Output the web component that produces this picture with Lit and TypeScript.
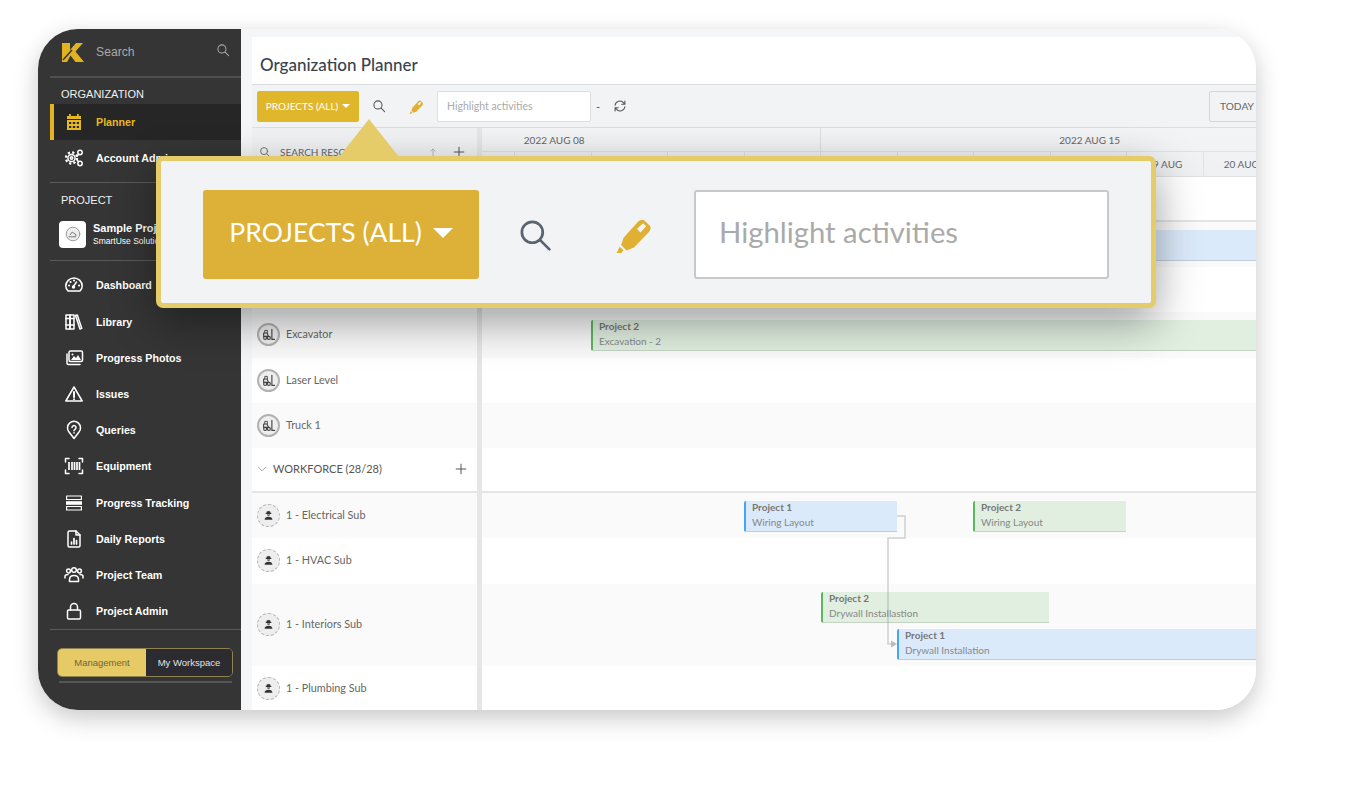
import { LitElement, html, css, svg } from 'lit';
import { customElement } from 'lit/decorators.js';

const icon = (body: unknown, size = 20, box = 20) => html`<svg
    class="ico"
    width=${size}
    height=${size}
    viewBox="0 0 ${box} ${box}"
    fill="none"
    stroke="currentColor"
    stroke-width="1.5"
    stroke-linecap="round"
    stroke-linejoin="round"
>
    ${body}
</svg>`;

const icons = {
    calendar: svg`<path fill="currentColor" stroke="none" d="M5 2h1.8v2H13V2h1.8v2h2.2v3H3V4h2zM3 8h14v10H3zM5 10v2h2.2v-2zm3.8 0v2h2.400v-2zm4 0v2H15v-2zM5 14v2h2.200v-2zm3.800 0v2h2.400v-2zm4 0v2H15v-2z"/>`,
    gears: svg`<circle cx="7.5" cy="10" r="3.6"/><circle cx="7.5" cy="10" r="5.6" stroke-width="2.2" stroke-dasharray="2.2 2.2" stroke-linecap="butt"/><circle cx="7.5" cy="10" r="1.2"/><circle cx="16" cy="4.5" r="2.2"/><circle cx="16" cy="15.5" r="2.2"/><path d="M13 8.200l1.600-2M13 12l1.600 1.800"/>`,
    dashboard: svg`<path d="M4 16h12c1.400-1.200 2.200-3 2.200-5A8.200 8 0 0 0 1.800 11c0 2 .8 3.800 2.200 5z"/><path d="M9 12l3.500-5"/><circle cx="9.500" cy="12" r="1" fill="currentColor"/><path d="M5 10.500h.1M6.500 7h.1M10 5.500h.1M15 10.500h.1" stroke-width="2"/>`,
    library: svg`<rect x="2" y="3" width="4" height="14"/><rect x="6" y="3" width="4" height="14"/><path d="M2 6.500h8M2 13h8M11.500 3.500l1.800-.6 4.500 13.500-1.800.6z"/>`,
    photos: svg`<rect x="5" y="3" width="13.500" height="10.500" rx="1.500"/><path d="M3 6v9a1.500 1.500 0 0 0 1.500 1.500H16"/><path fill="currentColor" stroke="none" d="M7 12l3-4 2 2 2-3 3 5z"/><circle cx="8.500" cy="6.500" r="1" fill="currentColor" stroke="none"/>`,
    issues: svg`<path d="M10 3L1.800 17h16.400z"/><path d="M10 8v5" stroke-width="2"/><path d="M10 15.200v.1" stroke-width="2"/>`,
    queries: svg`<path d="M10 18.500l-5-6.500a6.500 6.500 0 1 1 10 0z"/><path d="M8 7.500a2 2 0 1 1 3 1.800c-.7.4-1 .8-1 1.500M10 12.800v.1"/>`,
    equipment: svg`<path d="M1.500 6V2.500H5M15 2.500h3.500V6M1.500 14v3.500H5M15 17.500h3.500V14"/><path stroke-width="1.700" stroke-linecap="butt" d="M5 6v8M8 6v8M10.500 6v8M13 6v8M15.500 6v8"/>`,
    tracking: svg`<rect x="2.600" y="3" width="14.800" height="3.500" stroke-width="1.200"/><rect x="2" y="8.200" width="16" height="3.600" fill="currentColor" stroke="none"/><rect x="2.600" y="13.500" width="14.800" height="3.500" stroke-width="1.200"/>`,
    report: svg`<path d="M4 3.500A1.500 1.500 0 0 1 5.500 2H12l4 4v10.500a1.500 1.500 0 0 1-1.500 1.500h-9A1.500 1.500 0 0 1 4 16.500z"/><path d="M12 2v4h4"/><path d="M7.500 15v-2M10 15V9.500M12.500 15v-3.500" stroke-width="1.700"/>`,
    team: svg`<circle cx="4.500" cy="6" r="1.900"/><circle cx="10" cy="5" r="2.300"/><circle cx="15.500" cy="6" r="1.900"/><path d="M5.500 16.500v-2c0-2.500 2-4 4.500-4s4.500 1.500 4.500 4v2z"/><path d="M1 13v-1.500C1 10 2.500 9.500 4 9.500M19 13v-1.500c0-1.500-1.500-2-3-2"/>`,
    lock: svg`<rect x="3.500" y="9" width="13" height="9" rx="1.200"/><path d="M6.500 9V6a3.500 3.500 0 0 1 7 0v3"/>`,
    search: svg`<circle cx="8.500" cy="8.500" r="5.800"/><path d="M13 13l5 5"/>`,
    plus: svg`<path d="M10 2v16M2 10h16"/>`,
    refresh: svg`<path d="M3 9a7 7 0 0 1 12.300-3.500L17 7.500M17 3v4.500h-4.500M17 11a7 7 0 0 1-12.300 3.500L3 12.500M3 17v-4.500h4.500"/>`,
    chevron: svg`<path d="M4 7l6 6 6-6"/>`,
    up: svg`<path d="M10 17V4M5.500 8.500L10 4l4.500 4.500"/>`,
    pen: svg`<path fill="currentColor" stroke="none" d="M.8 19.500l1.700-3.300 2 1.800-1.200 1.500z"/><path fill="currentColor" stroke="none" fill-rule="evenodd" d="M3.200 15.300l1.300-3.800 7.500-8.300c1-1.100 2.600-1.700 3.600-.7l2.600 2.500c1 1 .5 2.600-.5 3.600l-7.700 8-3.900 1.600zM11.500 6.800l1.900 1.900 3-3.300-1.700-1.600z"/>`,
    forklift: svg`<path d="M3.500 12.500V8h4.500l2 4.500M3.500 12.500h7"/><path d="M5 8V4.500h3.500V8" stroke-width="1.200"/><circle cx="5.500" cy="14.500" r="2"/><circle cx="10.500" cy="14.500" r="2"/><path d="M14.500 3V16.500h3.500"/>`,
    worker: svg`<path fill="currentColor" stroke="none" d="M6.500 6.500a3.500 3.500 0 0 1 7 0h1v1h-9v-1z"/><path fill="currentColor" stroke="none" d="M7.400 8.500h5.200a2.700 2.700 0 0 1-5.200 0z"/><path fill="currentColor" stroke="none" d="M4 16.500c0-3 2.500-4.500 6-4.500s6 1.500 6 4.500z"/>`,
    digger: svg`<circle cx="10" cy="10" r="8.500" fill="#eee" stroke="#999" stroke-width="1.200"/><path stroke-width="1.200" d="M5 13.500h8M6.500 11l2.500-3.500 5 3.500-1.500 2.500"/>`,
};

const orgNav = [
    { label: 'Planner', icon: icons.calendar, active: true },
    { label: 'Account Admin', icon: icons.gears },
];

const projectNav = [
    { label: 'Dashboard', icon: icons.dashboard },
    { label: 'Library', icon: icons.library },
    { label: 'Progress Photos', icon: icons.photos },
    { label: 'Issues', icon: icons.issues },
    { label: 'Queries', icon: icons.queries },
    { label: 'Equipment', icon: icons.equipment },
    { label: 'Progress Tracking', icon: icons.tracking },
    { label: 'Daily Reports', icon: icons.report },
    { label: 'Project Team', icon: icons.team },
    { label: 'Project Admin', icon: icons.lock },
];

type Row = { h: number; label?: string; kind?: 'equip' | 'worker' | 'group'; line?: boolean };

const rows: Row[] = [
    { h: 45, line: true },
    { h: 45 },
    { h: 45 },
    { h: 46, label: 'Excavator', kind: 'equip' },
    { h: 45, label: 'Laser Level', kind: 'equip' },
    { h: 45, label: 'Truck 1', kind: 'equip' },
    { h: 45, label: 'WORKFORCE (28/28)', kind: 'group', line: true },
    { h: 45, label: '1 - Electrical Sub', kind: 'worker' },
    { h: 46, label: '1 - HVAC Sub', kind: 'worker' },
    { h: 82, label: '1 - Interiors Sub', kind: 'worker' },
    { h: 45, label: '1 - Plumbing Sub', kind: 'worker' },
];

// bar coordinates are relative to the timeline rows area (x 482, y 177)
const bars = [
    { p: 1, name: '', x: 500, y: 53, w: 400 },
    { p: 2, name: 'Excavation - 2', x: 109, y: 143, w: 700 },
    { p: 1, name: 'Wiring Layout', x: 262, y: 324, w: 153 },
    { p: 2, name: 'Wiring Layout', x: 491, y: 324, w: 153 },
    { p: 2, name: 'Drywall Installastion', x: 339, y: 415, w: 228 },
    { p: 1, name: 'Drywall Installation', x: 415, y: 452, w: 400 },
];

// labels left of the visible part of the timeline stay empty
const days = ['', '', '', '11 AUG', '12 AUG', '13 AUG', '14 AUG', '15 AUG', '16 AUG', '17 AUG', '18 AUG', '19 AUG', '20 AUG', ''];

@customElement('app-root')
export class AppRoot extends LitElement {
    static styles = css`
        :host {
            display: block;
            width: 1363px;
            height: 796px;
            box-sizing: border-box;
            padding: 29px 0 0 38px;
            background: #fff;
            font-family: 'Lato', 'Liberation Sans', sans-serif;
            overflow: hidden;
        }

        * {
            box-sizing: border-box;
        }

        .ico {
            display: block;
            flex: none;
        }

        .window {
            position: relative;
            display: flex;
            width: 1218px;
            height: 681px;
            border-radius: 40px;
            overflow: hidden;
            box-shadow: 0 8px 24px rgba(0, 0, 0, 0.22);
        }

        /* sidebar */
        .side {
            flex: none;
            width: 203px;
            padding-left: 12px;
            background: #353535;
            color: #fff;
            font-family: 'Liberation Sans', sans-serif;
        }

        .side-search {
            display: flex;
            align-items: center;
            height: 49px;
            padding: 0 11px 2px 12px;
            border-bottom: 2px solid #4f4f4f;
            color: #a9a9a9;
            font-size: 12.200px;
        }

        .side-search span {
            margin-left: 12px;
            flex: 1;
        }

        .side-search .ico {
            margin-top: -4px;
        }

        .sec {
            display: flex;
            align-items: center;
            padding-left: 11px;
            font-size: 11px;
            color: #f0f0f0;
        }

        .sec.org {
            height: 26px;
            padding-top: 6px;
        }

        .sec.prj {
            height: 32px;
            padding-top: 2px;
        }

        .nav {
            display: flex;
            align-items: center;
            height: 36.200px;
            padding-left: 14px;
            border-left: 4px solid transparent;
            font-size: 10.700px;
            font-weight: 700;
        }

        .nav.on {
            background: #262626;
            border-left-color: #e3b323;
            color: #e6b923;
        }

        .nav .ico {
            margin-left: -4px;
            margin-right: 12px;
        }

        .rule {
            height: 1px;
            background: #5a5a5a;
        }

        .org-nav {
            padding-bottom: 6px;
            border-bottom: 1px solid #5a5a5a;
        }

        .card {
            display: flex;
            align-items: center;
            height: 46px;
            padding: 0 0 7px 9px;
            border-bottom: 1px solid #5a5a5a;
        }

        .thumb {
            display: flex;
            align-items: center;
            justify-content: center;
            width: 27px;
            height: 27px;
            border-radius: 4px;
            background: #fff;
            color: #777;
        }

        .card-text {
            margin-left: 7px;
            white-space: nowrap;
        }

        .card-text b {
            display: block;
            font-size: 11px;
            line-height: 13px;
        }

        .card-text small {
            display: block;
            margin-top: 1px;
            font-size: 8.500px;
            line-height: 11px;
        }

        .project-nav {
            padding-top: 6px;
        }

        .toggle {
            display: flex;
            width: 176px;
            height: 29px;
            margin: 18px 0 0 7px;
            border: 1px solid #8f8250;
            border-radius: 5px;
            overflow: hidden;
            font-size: 9.500px;
        }

        .toggle div {
            display: flex;
            align-items: center;
            justify-content: center;
        }

        .toggle .a {
            width: 88px;
            background: #e6ca66;
            color: #6f6540;
        }

        .toggle .b {
            flex: 1;
            background: #2c2c30;
            color: #e2e2e2;
        }

        .side-end {
            height: 2px;
            width: 173px;
            margin: 4px 0 0 9px;
            background: #565656;
        }

        /* main */
        .main {
            flex: 1;
            min-width: 0;
            padding: 8px 0 0 11px;
            background: #f5f6f8;
        }

        .title {
            height: 48px;
            padding: 17px 0 0 8px;
            background: #fff;
            border-bottom: 1px solid #dcdde0;
            color: #39424f;
            font-size: 17px;
            font-weight: 500;
            line-height: 22px;
        }

        .tools {
            display: flex;
            align-items: center;
            height: 43px;
            padding-left: 5px;
            background: #f2f3f5;
            border-bottom: 1px solid #dcdde0;
            color: #555;
        }

        .proj-btn {
            display: flex;
            align-items: center;
            justify-content: center;
            width: 102px;
            height: 31px;
            padding-bottom: 1px;
            border-radius: 2px;
            background: #e0b72b;
            color: #fff;
            font-size: 10px;
            white-space: nowrap;
        }

        .caret {
            width: 0;
            height: 0;
            margin-left: 4px;
            border-left: 4px solid transparent;
            border-right: 4px solid transparent;
            border-top: 4px solid #fff;
        }

        .tools .find {
            margin-left: 13px;
        }

        .tools .pen {
            margin-left: 23px;
            color: #e0b033;
        }

        .field {
            display: flex;
            align-items: center;
            width: 154px;
            height: 31px;
            margin-left: 13px;
            padding: 0 0 1px 9px;
            border: 1px solid #dedede;
            border-radius: 2px;
            background: #fff;
            color: #aaa;
            font-size: 10.500px;
        }

        .dash {
            margin-left: 5px;
            font-size: 11px;
        }

        .tools .sync {
            margin-left: 13px;
        }

        .today {
            display: flex;
            align-items: center;
            width: 60px;
            height: 31px;
            margin-left: auto;
            margin-right: -13px;
            padding: 0 0 1px 10px;
            border: 1px solid #d5d5d5;
            border-radius: 2px;
            color: #666;
            font-size: 10.200px;
        }

        .body {
            display: flex;
            height: 583px;
        }

        .left {
            flex: none;
            width: 225px;
        }

        .left-head {
            display: flex;
            align-items: center;
            height: 49px;
            padding: 0 12px 2px 7px;
            background: #f1f2f4;
            color: #666;
            font-size: 10px;
        }

        .left-head span {
            flex: 1;
            margin-left: 9px;
        }

        .left-head .arrow {
            flex: none;
            margin-right: 15px;
            color: #aaa;
        }

        .left-head .add {
            flex: none;
            margin-left: 0;
            color: #444;
        }

        .row {
            display: flex;
            align-items: center;
            padding: 0 0 1px 5px;
            color: #666;
            font-size: 10.800px;
            background: #fff;
        }

        .row:nth-child(even) {
            background: #fafafa;
        }

        .row.line {
            border-bottom: 2px solid #e5e5e5;
        }

        .row .name {
            margin-top: -2px;
        }

        .avatar {
            display: flex;
            align-items: center;
            justify-content: center;
            width: 23px;
            height: 23px;
            margin-right: 6px;
            border-radius: 50%;
            background: #eee;
            border: 2px solid #b2b2b2;
            color: #444;
        }

        .avatar.worker {
            border: 1.500px dashed #b5b5b5;
            color: #333;
        }

        .row.group {
            padding-left: 4px;
            color: #555;
            font-size: 11px;
            white-space: nowrap;
        }

        .row.group .chev {
            flex: none;
            color: #999;
            margin-right: 5px;
        }

        .row.group .name {
            flex: 1;
        }

        .row.group .add {
            flex: none;
            margin-right: 10px;
            color: #444;
        }

        .split {
            flex: none;
            width: 5px;
            background: #e6e6e6;
        }

        .right {
            flex: 1;
            min-width: 0;
            overflow: hidden;
        }

        .scale {
            height: 49px;
            margin-left: -196.500px;
            width: 1071px;
            background: linear-gradient(#f3f4f6, #eff0f2);
            border-bottom: 1px solid #e0e1e3;
            color: #666;
            font-size: 10px;
        }

        .weeks,
        .days {
            display: flex;
        }

        .weeks {
            height: 24px;
            border-bottom: 1px solid #e0e1e3;
        }

        .days {
            height: 24px;
        }

        .week {
            display: flex;
            align-items: center;
            justify-content: center;
            flex: none;
            width: 535.500px;
            padding-left: 3px;
            border-right: 1px solid #dcdde0;
        }

        .day {
            display: flex;
            align-items: center;
            justify-content: center;
            flex: none;
            width: 76.500px;
            border-right: 1px solid #e0e1e3;
            white-space: nowrap;
        }

        .canvas {
            position: relative;
        }

        .links {
            position: absolute;
            left: 0;
            top: 0;
        }

        .bar {
            position: absolute;
            height: 31px;
            padding: 0 0 0 6px;
            border-left: 2px solid;
            border-bottom: 1px solid rgba(0, 0, 0, 0.12);
            border-radius: 2px 0 0 2px;
            color: #888;
            font-size: 10px;
            line-height: 15px;
            white-space: nowrap;
            overflow: hidden;
        }

        .bar b {
            display: block;
            margin-top: -1px;
            color: #777;
        }

        .bar.p1 {
            background: #dbeafb;
            border-left-color: #42a5f5;
        }

        .bar.p2 {
            background: rgba(92, 184, 92, 0.17);
            border-left-color: #5cb85c;
        }

        /* callout */
        .popup {
            position: absolute;
            left: 118px;
            top: 127px;
            display: flex;
            align-items: center;
            width: 1000px;
            height: 152px;
            padding: 29px 0 24px 42px;
            border: 5px solid #e6cb69;
            border-radius: 7px;
            background: #f1f3f5;
            box-shadow: 0 14px 44px rgba(0, 0, 0, 0.38);
        }

        .popup::before {
            content: '';
            position: absolute;
            left: 178px;
            top: -42px;
            width: 60px;
            height: 38px;
            background: #e6cb69;
            clip-path: polygon(50% 0, 100% 100%, 0 100%);
        }

        .big-btn {
            display: flex;
            align-items: center;
            justify-content: center;
            flex: none;
            width: 276px;
            height: 89px;
            padding-bottom: 6px;
            border-radius: 3px;
            background: #ddb038;
            color: #fff;
            font-size: 26.500px;
            white-space: nowrap;
        }

        .big-btn .caret {
            margin: 2px 0 0 11px;
            border-left-width: 10px;
            border-right-width: 10px;
            border-top-width: 10px;
        }

        .popup .find {
            margin-left: 38px;
            color: #5a6470;
        }

        .popup .pen {
            margin-left: 62px;
            color: #e0b033;
        }

        .big-field {
            display: flex;
            align-items: center;
            flex: none;
            width: 415px;
            height: 89px;
            margin-left: 41px;
            padding: 0 0 7px 23px;
            border: 2px solid #c9c9c9;
            border-radius: 3px;
            background: #fff;
            color: #aaa;
            font-size: 29.300px;
        }
    `;

    private renderRow(r: Row) {
        if (r.kind === 'group') {
            return html`<div class="row group line" style="height:${r.h}px">
                <span class="chev">${icon(icons.chevron, 12)}</span>
                <span class="name">${r.label}</span>
                <span class="add">${icon(icons.plus, 12)}</span>
            </div>`;
        }
        return html`<div class="row ${r.line ? 'line' : ''}" style="height:${r.h}px">
            ${r.kind
                ? html`<div class="avatar ${r.kind}">
                      ${icon(r.kind === 'equip' ? icons.forklift : icons.worker, r.kind === 'equip' ? 15 : 13)}
                  </div>`
                : ''}
            <span class="name">${r.label}</span>
        </div>`;
    }

    render() {
        return html`
            <div class="window">
                <aside class="side">
                    <div class="side-search">
                        <svg width="22" height="20" viewBox="0 0 22 20">
                            <path
                                fill="#e2b31f"
                                d="M0 1h8v7l6-7h7l-7.500 8.500L22 20h-8.500l-5-6.500L5 20H0z"
                            />
                            <path stroke="#353535" stroke-width="1.500" fill="none" d="M1 18l9-10" />
                        </svg>
                        <span>Search</span>
                        ${icon(icons.search, 14)}
                    </div>
                    <div class="sec org">ORGANIZATION</div>
                    <div class="org-nav">
                        ${orgNav.map(
                            (n) =>
                                html`<div class="nav ${n.active ? 'on' : ''}">
                                    ${icon(n.icon)}${n.label}
                                </div>`,
                        )}
                    </div>
                    <div class="sec prj">PROJECT</div>
                    <div class="card">
                        <div class="thumb">${icon(icons.digger, 16)}</div>
                        <div class="card-text">
                            <b>Sample Project</b>
                            <small>SmartUse Solutions</small>
                        </div>
                    </div>
                    <div class="project-nav">
                        ${projectNav.map(
                            (n) => html`<div class="nav">${icon(n.icon)}${n.label}</div>`,
                        )}
                    </div>
                    <div class="rule"></div>
                    <div class="toggle">
                        <div class="a">Management</div>
                        <div class="b">My Workspace</div>
                    </div>
                    <div class="side-end"></div>
                </aside>

                <main class="main">
                    <div class="title">Organization Planner</div>
                    <div class="tools">
                        <div class="proj-btn">PROJECTS (ALL)<i class="caret"></i></div>
                        <span class="find">${icon(icons.search, 14)}</span>
                        <span class="pen">${icon(icons.pen, 15)}</span>
                        <div class="field">Highlight activities</div>
                        <span class="dash">-</span>
                        <span class="sync">${icon(icons.refresh, 14)}</span>
                        <div class="today">TODAY</div>
                    </div>
                    <div class="body">
                        <div class="left">
                            <div class="left-head">
                                ${icon(icons.search, 12)}
                                <span>SEARCH RESOURCES</span>
                                <span class="arrow">${icon(icons.up, 10)}</span>
                                <span class="add">${icon(icons.plus, 12)}</span>
                            </div>
                            <div>${rows.map((r) => this.renderRow(r))}</div>
                        </div>
                        <div class="split"></div>
                        <div class="right">
                            <div class="scale">
                                <div class="weeks">
                                    <div class="week">2022 AUG 08</div>
                                    <div class="week">2022 AUG 15</div>
                                </div>
                                <div class="days">
                                    ${days.map((d) => html`<div class="day">${d}</div>`)}
                                </div>
                            </div>
                            <div class="canvas">
                                ${rows.map(
                                    (r) =>
                                        html`<div
                                            class="row ${r.line ? 'line' : ''}"
                                            style="height:${r.h}px"
                                        ></div>`,
                                )}
                                <svg class="links" width="774" height="534" fill="none">
                                    <path
                                        stroke="#cfcfcf"
                                        stroke-width="1.500"
                                        d="M414 339h9v22h-17v106h6"
                                    />
                                    <path fill="#bbb" d="M409 463.500l6 3.500-6 3.500z" />
                                </svg>
                                ${bars.map(
                                    (b) =>
                                        html`<div
                                            class="bar p${b.p}"
                                            style="left:${b.x}px;top:${b.y}px;width:${b.w}px"
                                        >
                                            <b>Project ${b.p}</b>${b.name}
                                        </div>`,
                                )}
                            </div>
                        </div>
                    </div>
                </main>

                <div class="popup">
                    <div class="big-btn">PROJECTS (ALL)<i class="caret"></i></div>
                    <span class="ico find">${icon(icons.search, 36)}</span>
                    <span class="ico pen">${icon(icons.pen, 38)}</span>
                    <div class="big-field">Highlight activities</div>
                </div>
            </div>
        `;
    }
}
